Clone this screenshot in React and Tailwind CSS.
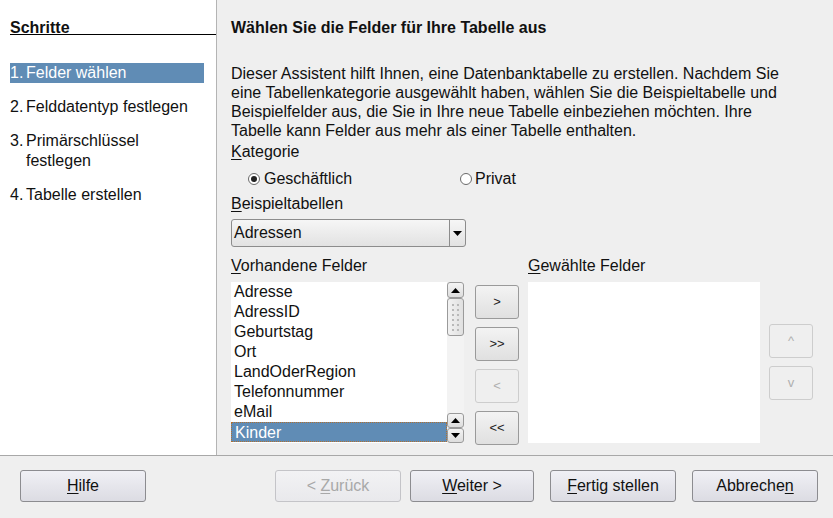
// Tabellen-Assistent: Schritt 1 – Felder wählen

const FIELDS = ['Adresse', 'AdressID', 'Geburtstag', 'Ort', 'LandOderRegion', 'Telefonnummer', 'eMail', 'Kinder']

const STEPS = [
  { n: '1.', label: 'Felder wählen', active: true, h: 'h-[20px]', mt: 'mt-[28px]' },
  { n: '2.', label: 'Felddatentyp festlegen', h: 'h-[20px]', mt: 'mt-[14px]' },
  { n: '3.', label: 'Primärschlüssel festlegen', h: 'h-[40px]', mt: 'mt-[14px]', wrap: true },
  { n: '4.', label: 'Tabelle erstellen', h: 'h-[20px]', mt: 'mt-[14px]' },
]

function U({ children }) {
  return <span className="underline underline-offset-[2px] decoration-1">{children}</span>
}

function DlgButton({ children, disabled, w = 'w-[126px]' }) {
  return (
    <div
      className={`${w} h-[32px] flex items-center justify-center rounded-[3px] border ${
        disabled
          ? 'border-[#c4c4c8] text-[#a8a8a8] bg-gradient-to-b from-[#f2f2f4] to-[#e9e9ec]'
          : 'border-[#8c8c90] text-[#111] bg-gradient-to-b from-[#f0f0f5] to-[#dcdce3]'
      }`}
    >
      <span className="whitespace-pre">{children}</span>
    </div>
  )
}

function SmallButton({ children, disabled }) {
  return (
    <div
      className={`w-[44px] h-[34px] flex items-center justify-center rounded-[3px] border text-[13px] ${
        disabled
          ? 'border-[#cdcdcd] text-[#b0b0b0] bg-[#efefef]'
          : 'border-[#9a9a9a] text-[#222] bg-gradient-to-b from-[#f3f3f3] to-[#e0e0e0]'
      }`}
    >
      {children}
    </div>
  )
}

function Arrow({ up }) {
  return (
    <svg width="9" height="5" viewBox="0 0 9 5">
      {up ? <path d="M0 5 L4.5 0 L9 5 Z" fill="#000" /> : <path d="M0 0 L4.5 5 L9 0 Z" fill="#000" />}
    </svg>
  )
}

function ScrollBtn({ up, h = 'h-[16px]' }) {
  return (
    <div className={`${h} w-full flex items-center justify-center rounded-[3px] border border-[#9a9a9a] bg-gradient-to-b from-[#f4f4f4] to-[#dddddd]`}>
      <Arrow up={up} />
    </div>
  )
}

function Radio({ checked }) {
  return (
    <span className="w-[12px] h-[12px] rounded-full border border-[#6a6a6a] bg-white flex items-center justify-center">
      {checked && <span className="w-[6px] h-[6px] rounded-full bg-[#222]" />}
    </span>
  )
}

export default function App() {
  return (
    <div
      className="w-[833px] h-[518px] flex flex-col bg-[#efefef] text-[16px] text-[#111] overflow-hidden"
      style={{ fontFamily: '"Liberation Sans", Arial, sans-serif' }}
    >
      <div className="h-[456px] flex border-b border-[#a8a8a8]">
        {/* Schritte */}
        <div className="w-[217px] bg-white border-r border-[#b4b4b4] flex flex-col pl-[10px]">
          <div className="mt-[18px] h-[17px] leading-[20px] font-bold border-b border-black">Schritte</div>
          {STEPS.map((s) => (
            <div
              key={s.n}
              className={`${s.mt} ${s.h} w-[194px] flex leading-[20px] ${s.active ? 'bg-[#608cb5] text-white' : ''}`}
            >
              <span className="w-[16px]">{s.n}</span>
              <span className={s.wrap ? 'w-[150px]' : ''}>{s.label}</span>
            </div>
          ))}
        </div>

        {/* Inhalt */}
        <div className="flex-1 pl-[14px] flex flex-col">
          <div className="mt-[18px] leading-[20px] font-bold">Wählen Sie die Felder für Ihre Tabelle aus</div>
          <p className="mt-[26px] w-[564px] leading-[19px]">
            Dieser Assistent hilft Ihnen, eine Datenbanktabelle zu erstellen. Nachdem Sie eine Tabellenkategorie ausgewählt haben, wählen Sie die Beispieltabelle und Beispielfelder aus, die Sie in Ihre neue Tabelle einbeziehen möchten. Ihre Tabelle kann Felder aus mehr als einer Tabelle enthalten.
          </p>
          <div className="mt-[2px] leading-[20px]"><U>K</U>ategorie</div>
          <div className="mt-[7px] h-[20px] flex items-center">
            <div className="ml-[17px] w-[212px] flex items-center gap-[4px]">
              <Radio checked />
              <span>Geschäftlich</span>
            </div>
            <div className="flex items-center gap-[3px]">
              <Radio />
              <span>Privat</span>
            </div>
          </div>
          <div className="mt-[5px] leading-[20px]"><U>B</U>eispieltabellen</div>

          <div className="mt-[5px] w-[235px] h-[28px] flex rounded-[3px] border border-[#8c8c8c] bg-gradient-to-b from-[#f6f6f6] to-[#e2e2e2]">
            <div className="flex-1 pl-[2px] flex items-center">Adressen</div>
            <div className="w-[16px] border-l border-[#8c8c8c] flex items-center justify-center">
              <Arrow />
            </div>
          </div>

          <div className="mt-[9px] flex">
            <div className="w-[233px] flex flex-col">
              <div className="leading-[20px]"><U>V</U>orhandene Felder</div>
              <div className="mt-[6px] h-[161px] bg-white flex">
                <div className="flex-1 flex flex-col">
                  {FIELDS.map((f) => (
                    <div
                      key={f}
                      className={`h-[20px] leading-[20px] pl-[3px] ${
                        f === 'Kinder' ? 'bg-[#608cb5] text-white border border-dotted border-[#b07030] pl-[2px] leading-[18px]' : ''
                      }`}
                    >
                      {f}
                    </div>
                  ))}
                </div>
                <div className="w-[17px] flex flex-col bg-[#f3f3f3]">
                  <ScrollBtn up />
                  <div className="h-[38px] rounded-[3px] border border-[#9a9a9a] bg-gradient-to-r from-[#f2f2f2] to-[#e0e0e0] flex flex-wrap content-center justify-center gap-[3px] px-[3px]">
                    {Array.from({ length: 12 }).map((_, i) => (
                      <span key={i} className="w-[2px] h-[2px] bg-[#b8b8b8]" />
                    ))}
                  </div>
                  <div className="flex-1" />
                  <ScrollBtn up h="h-[15px]" />
                  <ScrollBtn h="h-[15px]" />
                </div>
              </div>
            </div>

            <div className="ml-[11px] mt-[29px] flex flex-col gap-[8px]">
              <SmallButton>&gt;</SmallButton>
              <SmallButton>&gt;&gt;</SmallButton>
              <SmallButton disabled>&lt;</SmallButton>
              <SmallButton>&lt;&lt;</SmallButton>
            </div>

            <div className="ml-[9px] w-[232px] flex flex-col">
              <div className="leading-[20px]"><U>G</U>ewählte Felder</div>
              <div className="mt-[6px] h-[161px] bg-white" />
            </div>

            <div className="ml-[9px] mt-[68px] flex flex-col gap-[8px]">
              <SmallButton disabled>^</SmallButton>
              <SmallButton disabled>v</SmallButton>
            </div>
          </div>
        </div>
      </div>

      {/* Fußleiste */}
      <div className="flex-1 flex items-center pl-[20px] pb-[2px]">
        <DlgButton><U>H</U>ilfe</DlgButton>
        <div className="ml-[129px]">
          <DlgButton disabled>{'< '}<U>Z</U>urück</DlgButton>
        </div>
        <div className="ml-[9px]">
          <DlgButton w="w-[124px]"><U>W</U>eiter &gt;</DlgButton>
        </div>
        <div className="ml-[16px]">
          <DlgButton><U>F</U>ertig stellen</DlgButton>
        </div>
        <div className="ml-[16px]">
          <DlgButton>Abbreche<U>n</U></DlgButton>
        </div>
      </div>
    </div>
  )
}
